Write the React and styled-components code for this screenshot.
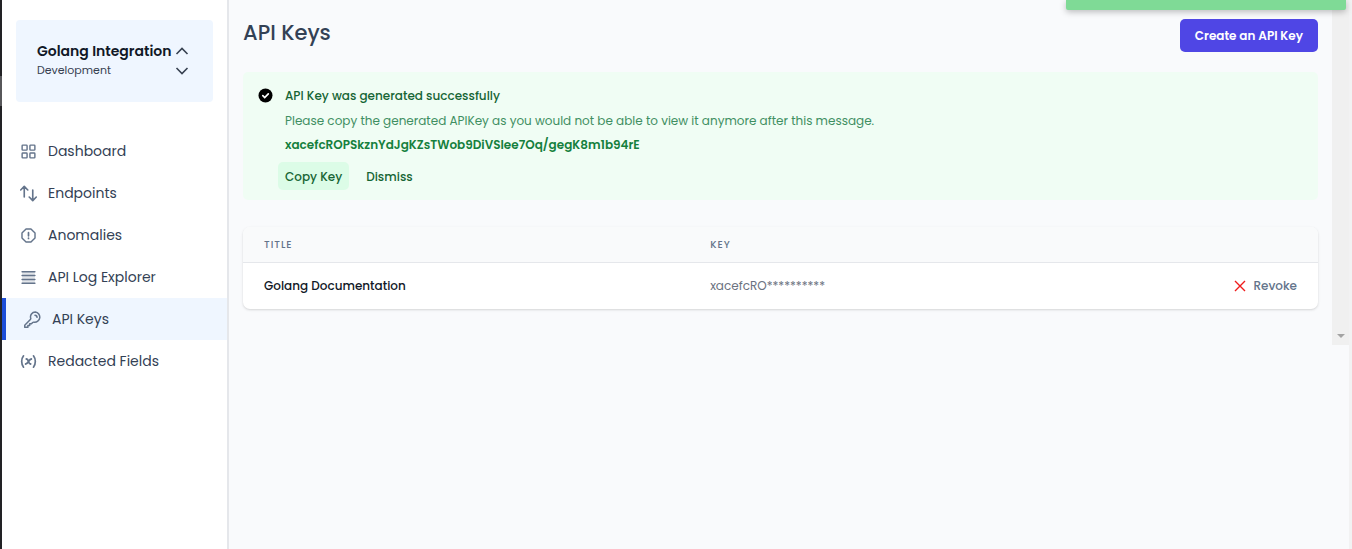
import React from "react";
import styled, { createGlobalStyle } from "styled-components";

const GlobalStyle = createGlobalStyle`
  *, *::before, *::after { box-sizing: border-box; }
  body { margin: 0; background: #f9fafc; color: #1e293b; }
  body, button { font-family: Poppins, Inter, "Open Sans", sans-serif; }
  button { border: 0; background: none; cursor: pointer; }
  h1, h2, p { margin: 0; }
`;

const Shell = styled.div`
  display: flex;
  min-height: 100vh;
  border-right: 3px solid #f2f2f3;
`;

const Edge = styled.div`
  flex: 0 0 2px;
  background: linear-gradient(#222225 76px, #57575a 76px, #57575a 106px, #222225 106px);
`;

const Sidebar = styled.aside`
  flex: 0 0 227px;
  background: #fff;
  border-right: 2px solid #e5e7eb;
`;

const ProjectButton = styled.button`
  display: flex;
  align-items: center;
  justify-content: space-between;
  width: calc(100% - 28px);
  height: 82px;
  margin: 20px 14px 28px;
  padding: 0 24px 0 21px;
  border-radius: 4px;
  background: #eff6ff;
  text-align: left;
`;

const ProjectText = styled.span`
  display: flex;
  flex-direction: column;
  padding-bottom: 4px;
  white-space: nowrap;
`;

const ProjectName = styled.span`
  color: #111827;
  font-size: 14px;
  font-weight: 600;
  line-height: 22px;
`;

const ProjectStage = styled.span`
  color: #374151;
  font-size: 11px;
  line-height: 16px;
`;

const NavLink = styled.a`
  display: flex;
  align-items: center;
  gap: 11px;
  height: 42px;
  padding-left: 18px;
  border-left: ${(p) => (p.$active ? "4px solid #1d4ed8" : "0")};
  background: ${(p) => (p.$active ? "#eff6ff" : "transparent")};
  color: #334155;
  font-size: 14px;
  line-height: 20px;
  text-decoration: none;
  svg { flex: none; color: #64748b; }
`;

const Main = styled.main`
  flex: 1;
  min-width: 0;
  padding: 19px 14px;
`;

const Header = styled.header`
  display: flex;
  align-items: flex-start;
  justify-content: space-between;
  margin-bottom: 20px;
`;

const Title = styled.h1`
  color: #334155;
  font-size: 21px;
  font-weight: 500;
  line-height: 28px;
`;

const CreateButton = styled.button`
  height: 33px;
  padding: 0 15px;
  border-radius: 5px;
  background: #4f46e5;
  color: #fff;
  font-size: 12px;
  font-weight: 600;
`;

const Notice = styled.section`
  display: flex;
  gap: 12px;
  margin-bottom: 27px;
  padding: 14px 15px 10px;
  border-radius: 5px;
  background: #f0fdf4;
  font-size: 12px;
  line-height: 20px;
`;

const NoticeIcon = styled.svg`
  flex: none;
  margin-top: 2px;
`;

const NoticeTitle = styled.h2`
  color: #166534;
  font-size: 12px;
  font-weight: 500;
  line-height: 20px;
`;

const NoticeText = styled.p`
  margin-top: ${(p) => (p.$strong ? "4px" : "5px")};
  color: ${(p) => (p.$strong ? "#15803d" : "#3f8f62")};
  font-weight: ${(p) => (p.$strong ? 600 : 400)};
`;

const Actions = styled.div`
  display: flex;
  gap: 10px;
  margin: 7px 0 0 -7px;
`;

const ActionButton = styled.button`
  height: 28px;
  padding: 1px 7px 0;
  border-radius: 5px;
  background: ${(p) => (p.$filled ? "#dcfce7" : "transparent")};
  color: #166534;
  font-size: 12px;
  font-weight: 500;
`;

const TableCard = styled.div`
  overflow: hidden;
  border-radius: 7px;
  background: #fff;
  box-shadow: 0 1px 3px rgba(0, 0, 0, 0.1), 0 1px 2px rgba(0, 0, 0, 0.06);
`;

const Table = styled.table`
  width: 100%;
  border-spacing: 0;
  table-layout: fixed;
`;

const HeadCell = styled.th`
  width: ${(p) => p.$width};
  height: 36px;
  padding: 0 21px;
  border-bottom: 1px solid #e5e7eb;
  background: #f9fafb;
  color: #64748b;
  font-size: 10px;
  font-weight: 500;
  letter-spacing: 1px;
  text-align: left;
`;

const Cell = styled.td`
  height: 46px;
  padding: 0 21px;
  color: ${(p) => (p.$muted ? "#6b7280" : "#111827")};
  font-size: 12px;
  font-weight: ${(p) => (p.$muted ? 400 : 500)};
  text-align: ${(p) => (p.$end ? "right" : "left")};
`;

const RevokeButton = styled.button`
  display: inline-flex;
  align-items: center;
  gap: 7px;
  padding: 2px 0 0;
  color: #64748b;
  font-size: 12px;
  font-weight: 500;
`;

const ScrollTrack = styled.div`
  display: flex;
  flex: 0 0 17px;
  align-items: flex-end;
  justify-content: center;
  height: 345px;
  padding-bottom: 7px;
  background: #f0f0f0;
`;

const Toast = styled.div`
  position: fixed;
  top: 0;
  right: 6px;
  width: 280px;
  height: 10px;
  border-radius: 0 0 2px 2px;
  background: #7fda96;
  box-shadow: 0 2px 6px rgba(0, 0, 0, 0.25);
`;

const Icon = ({ children, width = 2 }) => (
  <svg width="17" height="17" viewBox="0 0 24 24" fill="none" stroke="currentColor" strokeWidth={width} strokeLinecap="round" strokeLinejoin="round" aria-hidden="true">
    {children}
  </svg>
);

const icons = {
  grid: (
    <Icon>
      <rect x="3" y="3" width="7" height="7" rx="1" />
      <rect x="14" y="3" width="7" height="7" rx="1" />
      <rect x="3" y="14" width="7" height="7" rx="1" />
      <rect x="14" y="14" width="7" height="7" rx="1" />
    </Icon>
  ),
  arrows: (
    <Icon width={2.3}>
      <path d="M6 17V2M1 7l5-5 5 5M18 7v15M13 17l5 5 5-5" />
    </Icon>
  ),
  alert: (
    <Icon>
      <path d="M8.500 2.800h7l5.700 5.700v7l-5.700 5.700h-7l-5.700-5.700v-7z" />
      <path d="M12 8v4.500M12 15.800v.4" strokeWidth="2.400" />
    </Icon>
  ),
  lines: (
    <Icon width={2.2}>
      <path d="M3 4h18v16H3z" fill="#64748b" fillOpacity=".18" stroke="none" />
      <path d="M3 4h18M3 9.300h18M3 14.700h18M3 20h18" />
    </Icon>
  ),
  key: (
    <Icon width={2.1}>
      <path d="M16 1.500a6.700 6.700 0 0 0-6.500 8.700c.2.700 0 1.300-.5 1.800L1.700 19.300c-.4.400-.7.900-.7 1.500V23h4.500v-2.500H8V18h2.500l1.800-1.800c.5-.5 1.100-.6 1.800-.4A7.200 7.200 0 1 0 16 1.500z" />
      <path d="M15.500 6a3.200 3.200 0 0 1 3 3" />
    </Icon>
  ),
  variable: (
    <Icon width={2.4}>
      <path d="M5 4C1.500 8.500 1.500 15.500 5 20M19 4c3.500 4.500 3.500 11.500 0 16" />
      <path d="M9 8.500c3.500-.5 2.500 7.500 6 7M16 8.500c-3.500 0-4.500 7-8 7" strokeWidth="2.600" />
    </Icon>
  ),
};

const navItems = [
  ["Dashboard", "grid"],
  ["Endpoints", "arrows"],
  ["Anomalies", "alert"],
  ["API Log Explorer", "lines"],
  ["API Keys", "key"],
  ["Redacted Fields", "variable"],
];

export default function App() {
  return (
    <>
      <GlobalStyle />
      <Shell>
        <Edge />
        <Sidebar>
          <ProjectButton type="button">
            <ProjectText>
              <ProjectName>Golang Integration</ProjectName>
              <ProjectStage>Development</ProjectStage>
            </ProjectText>
            <svg width="14" height="30" viewBox="0 0 14 30" fill="none" stroke="#374151" strokeWidth="1.600" aria-hidden="true">
              <path d="M1.500 8L7 2.500 12.500 8M1.500 22L7 27.500l5.500-5.500" />
            </svg>
          </ProjectButton>
          <nav>
            {navItems.map(([label, icon]) => (
              <NavLink key={label} href="#" $active={label === "API Keys"}>
                {icons[icon]}
                {label}
              </NavLink>
            ))}
          </nav>
        </Sidebar>
        <Main>
          <Header>
            <Title>API Keys</Title>
            <CreateButton type="button">Create an API Key</CreateButton>
          </Header>
          <Notice>
            <NoticeIcon width="15" height="15" viewBox="0 0 15 15" aria-hidden="true">
              <circle cx="7.500" cy="7.500" r="7" fill="#000" />
              <path d="M4.800 7.700l1.900 1.800 3.600-3.700" fill="none" stroke="#fff" strokeWidth="1.700" strokeLinecap="round" />
            </NoticeIcon>
            <div>
              <NoticeTitle>API Key was generated successfully</NoticeTitle>
              <NoticeText>Please copy the generated APIKey as you would not be able to view it anymore after this message.</NoticeText>
              <NoticeText $strong>xacefcROPSkznYdJgKZsTWob9DiVSIee7Oq/gegK8m1b94rE</NoticeText>
              <Actions>
                <ActionButton type="button" $filled>Copy Key</ActionButton>
                <ActionButton type="button">Dismiss</ActionButton>
              </Actions>
            </div>
          </Notice>
          <TableCard>
            <Table>
              <thead>
                <tr>
                  <HeadCell $width="41.500%">TITLE</HeadCell>
                  <HeadCell $width="40%">KEY</HeadCell>
                  <HeadCell $width="18.500%" aria-label="Actions" />
                </tr>
              </thead>
              <tbody>
                <tr>
                  <Cell>Golang Documentation</Cell>
                  <Cell $muted>xacefcRO**********</Cell>
                  <Cell $end>
                    <RevokeButton type="button">
                      <svg width="12" height="12" viewBox="0 0 12 12" stroke="#ef1c1c" strokeWidth="1.400" aria-hidden="true">
                        <path d="M1 1l10 10M11 1L1 11" />
                      </svg>
                      Revoke
                    </RevokeButton>
                  </Cell>
                </tr>
              </tbody>
            </Table>
          </TableCard>
        </Main>
        <ScrollTrack aria-hidden="true">
          <svg width="8" height="4" viewBox="0 0 8 4"><path d="M0 0h8L4 4z" fill="#a3a3a3" /></svg>
        </ScrollTrack>
      </Shell>
      <Toast role="status" />
    </>
  );
}
